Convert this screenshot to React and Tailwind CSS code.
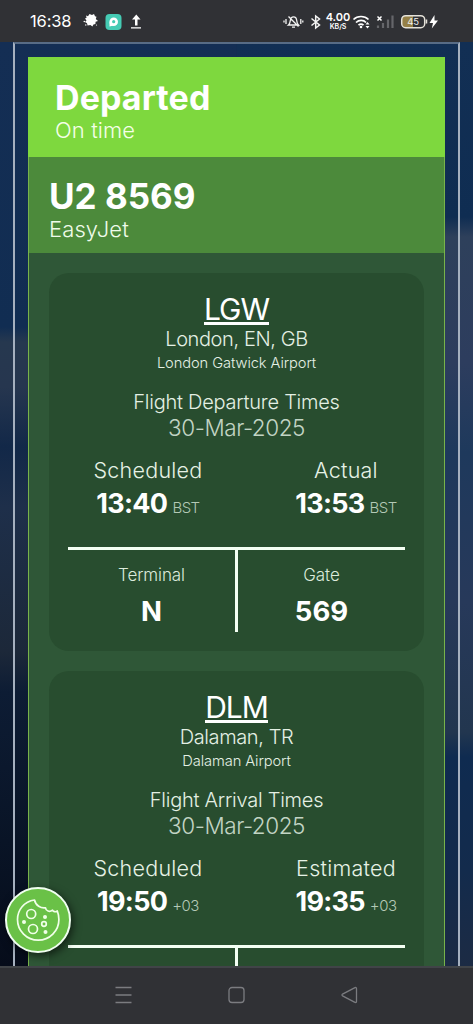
import React from "react";

const CARDS = [
  {
    code: "LGW", city: "London, EN, GB", airport: "London Gatwick Airport", title: "Flight Departure Times",
    date: "30-Mar-2025", rightLabel: "Actual", left: "13:40", right: "13:53", zone: "BST", terminal: "N", gate: "569",
  },
  {
    code: "DLM", city: "Dalaman, TR", airport: "Dalaman Airport", title: "Flight Arrival Times",
    date: "30-Mar-2025", rightLabel: "Estimated", left: "19:50", right: "19:35", zone: "+03",
  },
];

function Time({ label, value, zone, className }) {
  return (
    <div className={"flex flex-col items-center whitespace-nowrap " + className}>
      <div className="h-7 text-[21.5px] leading-[27px] font-light tracking-[0.25px] text-[#e6f2e6]">{label}</div>
      <div className="flex h-[37px] items-baseline gap-[5px] leading-[37px]">
        <span className="text-[27px] font-bold tracking-[-0.7px] text-white">{value}</span>
        <span className="text-[15px] font-light tracking-[-0.5px] text-[#b4c9b6]">{zone}</span>
      </div>
    </div>
  );
}

function Cell({ label, value, className }) {
  return (
    <div className={"flex-1 pt-[9px] text-center " + className}>
      {label && <div className="h-[31px] text-[17px] leading-[32px] font-light tracking-[-0.1px] text-[#dcebdc]">{label}</div>}
      {value && <div className="h-[42px] text-[27.5px] leading-[43px] font-bold text-white">{value}</div>}
    </div>
  );
}

function AirportCard({ d }) {
  return (
    <section className="h-[378px] shrink-0 rounded-[20px] bg-[#284d2f] px-[19px] pt-[18px] text-center whitespace-nowrap">
      <div className="h-9 text-[30px] leading-9 text-white">
        <span className="inline-block h-[34px] border-b-[3px] border-white leading-9 font-normal tracking-[-1.1px]">{d.code}</span>
      </div>
      <div className="h-6 text-[20px] leading-[25px] font-light tracking-[-0.4px] text-[#e4f0e4]">{d.city}</div>
      <div className="h-[23px] text-[14.7px] leading-[24px] font-light tracking-[-0.1px] text-[#e4f0e4]">{d.airport}</div>
      <div className="mt-[15px] h-[26px] text-[20px] leading-[27px] font-light tracking-[-0.25px] text-[#e4f0e4]">{d.title}</div>
      <div className="h-[25px] text-[22.5px] leading-[25px] font-light tracking-[-0.45px] text-[#c2d4c4]">{d.date}</div>
      <div className="mt-[17px] flex justify-between">
        <Time className="w-[160px]" label="Scheduled" value={d.left} zone={d.zone} />
        <Time className="w-[118px]" label={d.rightLabel} value={d.right} zone={d.zone} />
      </div>
      <div className="mt-[25px] flex h-[85px] border-t-[3px] border-[#f4fff4]">
        <Cell className="border-r-[3px] border-[#f4fff4]" label={d.terminal && "Terminal"} value={d.terminal} />
        <Cell className="" label={d.gate && "Gate"} value={d.gate} />
      </div>
    </section>
  );
}

function StatusBar() {
  return (
    <header className="flex h-[42px] shrink-0 items-center bg-[#303135] pl-[30px] text-white">
      <span className="w-[53px] text-[16.5px] tracking-[-0.15px]">16:38</span>
      <svg width="60" height="20" viewBox="0 0 60 20">
        <path d="M3 4.500l2 .7L6.500 3 9 4l2-1 1 2.200 1.500.5-.7 2.300 2.200 2-2.400.8-.2 2.200-2 .4-1 2.100-2-1.500-2.800.5-.6-2.300L2 11l1.500-1.500L2 7.500l1.600-.8z" fill="#fff" />
        <circle cx="1.300" cy="10.500" r=".8" fill="#fff" /><circle cx="2.800" cy="14" r=".7" fill="#fff" /><circle cx="13.500" cy="14" r=".6" fill="#fff" />
        <rect x="22.500" y="3" width="16" height="16" rx="4" fill="#45cbb4" />
        <circle cx="30.700" cy="10.700" r="4.300" fill="#fff" /><circle cx="30.700" cy="10.700" r="1.600" fill="#45cbb4" /><path d="M26.500 11v4.500l4-1z" fill="#fff" />
        <path d="M49 8.500h3v6h2.500v-6h3L53.300 3.500zM48 16.200h10v1.200H48z" fill="#fff" />
      </svg>
      <svg className="ml-[140px]" width="41" height="20" viewBox="0 0 41 20" fill="none" stroke="#f4f4f4" strokeWidth="1.300">
        <path d="M5.500 14c1.500-1.200 1.500-2.500 1.800-4.500C7.700 6.500 9 5.800 10.500 5.800s3 1 3.200 3.700c.2 2 .5 3.300 1.800 4.500zM5.500 5.500l10 10M9 16.200h3M3 8v5M1 9.500v2M17.800 8v5M19.800 9.500v2" />
        <path strokeWidth="1.500" d="M28.500 7.500l8 6.500-3.800 3V5l3.800 3-8 6.500" />
      </svg>
      <div className="w-7 text-center font-semibold">
        <div className="text-[11px] leading-[11px]">4.00</div>
        <div className="text-[7px] leading-[7px]">KB/S</div>
      </div>
      <svg width="90" height="20" viewBox="0 0 90 20" fill="none">
        <path d="M1.500 8.500c4-4 11-4 15 0M4 11.500c3-2.800 7.500-2.800 10 0M6.500 14.200c1.500-1.300 3.500-1.300 5 0" stroke="#fff" strokeWidth="1.700" />
        <circle cx="9" cy="16" r="1.300" fill="#fff" /><path d="M13.500 13.500l2-2.500 2 2.500zM13.500 15l2 2.500 2-2.500z" fill="#fff" />
        <path d="M25.500 5.500l4 4M29.500 5.500l-4 4" stroke="#fff" strokeWidth="1.500" />
        <path d="M26 14.500v2.500M31 12v5M36 8.500v8.500M40.500 4.500v12.500" stroke="#65666a" strokeWidth="2.200" />
        <path d="M53 5h8v11h-8q-3 0-3-3V8q0-3 3-3z" fill="#958047" />
        <rect x="49.700" y="4.700" width="23" height="12" rx="4" stroke="#e6e3da" strokeWidth="1.500" />
        <path d="M74.500 8.500v4" stroke="#e6e3da" strokeWidth="1.500" />
        <text x="61.200" y="14.100" textAnchor="middle" fontSize="9.500" fill="#eee">45</text>
        <path d="M82.500 4l-5 8h3.500l-1.200 5.500 6.200-8h-3.500z" fill="#fff" />
      </svg>
    </header>
  );
}

function CookieButton() {
  return (
    <button className="absolute top-[887px] left-[5px] flex size-[66px] items-center justify-center rounded-full border-2 border-[#f0fff0] bg-[#6ac147] shadow-[2px_3px_8px_rgba(0,0,0,0.6)]">
      <svg width="46" height="46" viewBox="0 0 46 46" fill="none" stroke="#f0ffe8" strokeWidth="1.700" strokeLinejoin="round">
        <path d="M19.500 3C9 4.500 2.500 13 2.500 22.500a20.700 20.700 0 0 0 41.400 0c0-3-.6-6-1.600-8.500-1.800 1.300-3.800.8-4.800-.8-3 2.300-6.500.8-7-2.400-4.500.8-10-2.300-11-7.800z" />
        <circle cx="16.200" cy="17" r="4.500" /><circle cx="18" cy="32" r="4.500" /><circle cx="29" cy="27" r="2.300" />
        <g fill="#f0ffe8" stroke="none"><circle cx="9" cy="25" r="2" /><circle cx="30" cy="20" r="2" /><circle cx="30.500" cy="35" r="2" /></g>
      </svg>
    </button>
  );
}

export default function App() {
  return (
    <div className="relative flex h-[1024px] w-[473px] flex-col overflow-hidden bg-[#132c50] font-['Inter',sans-serif]">
      <StatusBar />
      <main className="h-[924px] shrink-0 overflow-hidden bg-[linear-gradient(#142e54_0px,#112d52_285px,#26384f_300px,#26364f_345px,#122848_405px,#1e2f4a_465px,#1c2839_610px,#0d1c34_650px,#091426_800px,#060c1a_924px),linear-gradient(#122f54_0px,#0f2d52_175px,#2e405b_195px,#2d3d5e_320px,#1e395c_410px,#27395a_560px,#22364f_690px,#0f2b50_715px,#132b4c_830px,#1c2b44_924px)] bg-[size:50%_100%] bg-[position:left,right] bg-no-repeat px-[13px]">
        <div className="h-full border-x-2 border-t-2 border-x-[#a5b0bf] border-t-[#586c86] px-[13px] pt-[13px]">
          <article className="flex h-[950px] w-[417px] flex-col border-x border-[#78b34b] bg-[#2f5737]">
            <div className="-mx-px h-[100px] shrink-0 bg-[#7ed83e] pt-[21px] pl-[27px]">
              <h1 className="h-10 text-[34px] leading-10 font-bold tracking-[0.1px] text-white">Departed</h1>
              <p className="h-[26px] text-[22px] leading-[25px] font-light tracking-[0.1px] text-[#f4ffe8]">On time</p>
            </div>
            <div className="h-24 shrink-0 bg-[#4c8a3b] pt-[19px] pl-[20px]">
              <h2 className="h-10 text-[35px] leading-10 font-bold text-white">U2 8569</h2>
              <p className="h-[28px] text-[22px] leading-[26px] font-light tracking-[0.1px] text-[#effbea]">EasyJet</p>
            </div>
            <div className="flex flex-col gap-5 px-5 pt-5">
              {CARDS.map((d) => <AirportCard key={d.code} d={d} />)}
            </div>
          </article>
        </div>
      </main>
      <nav className="flex h-[58px] shrink-0 items-center border-t-2 border-[#414448] bg-[#303135] pl-[114px]">
        <svg className="-mt-[2px]" width="246" height="20" viewBox="0 0 246 20" fill="none" stroke="#7b7c80" strokeWidth="1.300">
          <path d="M1.500 2.500h16M1.500 10h16M1.500 17.500h16" />
          <rect x="115" y="2.500" width="15" height="15" rx="3" />
          <path d="M240.500 2.800q2-1 2 1v12.400q0 2-2 1l-11.500-6q-2-1.200 0-2.400z" />
        </svg>
      </nav>
      <CookieButton />
    </div>
  );
}
